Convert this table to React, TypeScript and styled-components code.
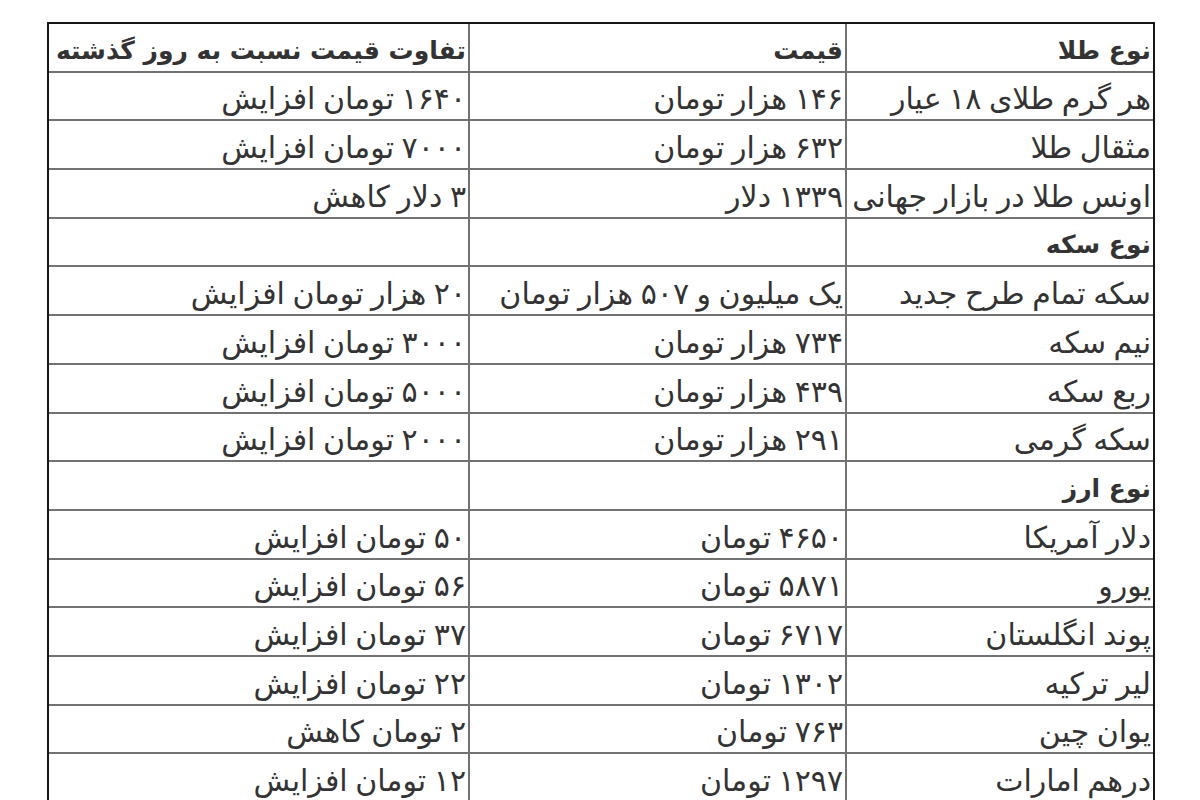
import React from "react";
import styled, { createGlobalStyle } from "styled-components";

const GlobalStyle = createGlobalStyle`
  html, body {
    margin: 0;
    padding: 0;
    background: #ffffff;
  }
`;

type Row = {
  cells: [string, string, string];
  isHeading?: boolean;
};

const rows: Row[] = [
  { cells: ["نوع طلا", "قیمت", "تفاوت قیمت نسبت به روز گذشته"], isHeading: true },
  { cells: ["هر گرم طلای ۱۸ عیار", "۱۴۶ هزار تومان", "۱۶۴۰ تومان افزایش"] },
  { cells: ["مثقال طلا", "۶۳۲ هزار تومان", "۷۰۰۰ تومان افزایش"] },
  { cells: ["اونس طلا در بازار جهانی", "۱۳۳۹ دلار", "۳ دلار کاهش"] },
  { cells: ["نوع سکه", "", ""], isHeading: true },
  { cells: ["سکه تمام طرح جدید", "یک میلیون و ۵۰۷ هزار تومان", "۲۰ هزار تومان افزایش"] },
  { cells: ["نیم سکه", "۷۳۴ هزار تومان", "۳۰۰۰ تومان افزایش"] },
  { cells: ["ربع سکه", "۴۳۹ هزار تومان", "۵۰۰۰ تومان افزایش"] },
  { cells: ["سکه گرمی", "۲۹۱ هزار تومان", "۲۰۰۰ تومان افزایش"] },
  { cells: ["نوع ارز", "", ""], isHeading: true },
  { cells: ["دلار آمریکا", "۴۶۵۰ تومان", "۵۰ تومان افزایش"] },
  { cells: ["یورو", "۵۸۷۱ تومان", "۵۶ تومان افزایش"] },
  { cells: ["پوند انگلستان", "۶۷۱۷ تومان", "۳۷ تومان افزایش"] },
  { cells: ["لیر ترکیه", "۱۳۰۲ تومان", "۲۲ تومان افزایش"] },
  { cells: ["یوان چین", "۷۶۳ تومان", "۲ تومان کاهش"] },
  { cells: ["درهم امارات", "۱۲۹۷ تومان", "۱۲ تومان افزایش"] },
];

const Page = styled.div`
  height: 800px;
  overflow: hidden;
  padding: 22px 0 0 47px;
  box-sizing: border-box;
`;

const Frame = styled.div`
  width: 1108px;
  border: 2px solid #161616;
  box-sizing: border-box;
`;

const PriceTable = styled.table`
  direction: rtl;
  width: 100%;
  border-collapse: collapse;
  table-layout: fixed;
  font-family: "DejaVu Sans", sans-serif;
  color: #333333;
`;

const Cell = styled.td<{ isHeading?: boolean }>`
  height: 45.7px;
  padding: 0 2px 1px 0;
  border: 2px solid #727272;
  text-align: right;
  vertical-align: bottom;
  font-size: ${(props) => (props.isHeading ? "25px" : "30px")};
  line-height: 38px;
  font-weight: ${(props) => (props.isHeading ? 700 : 400)};
  word-spacing: ${(props) => (props.isHeading ? "0" : "-2px")};
  white-space: nowrap;
  overflow: hidden;

  &:first-child {
    border-right: none;
  }
  &:last-child {
    border-left: none;
  }
  tr:first-child > & {
    border-top: none;
  }
`;

const App: React.FC = () => {
  return (
    <Page>
      <GlobalStyle />
      <Frame>
        <PriceTable>
          <colgroup>
            <col style={{ width: 307 }} />
            <col style={{ width: 377 }} />
            <col />
          </colgroup>
          <tbody>
            {rows.map((row, index) => (
              <tr key={index}>
                {row.cells.map((text, cellIndex) => (
                  <Cell key={cellIndex} isHeading={row.isHeading}>
                    {text}
                  </Cell>
                ))}
              </tr>
            ))}
          </tbody>
        </PriceTable>
      </Frame>
    </Page>
  );
};

export default App;
